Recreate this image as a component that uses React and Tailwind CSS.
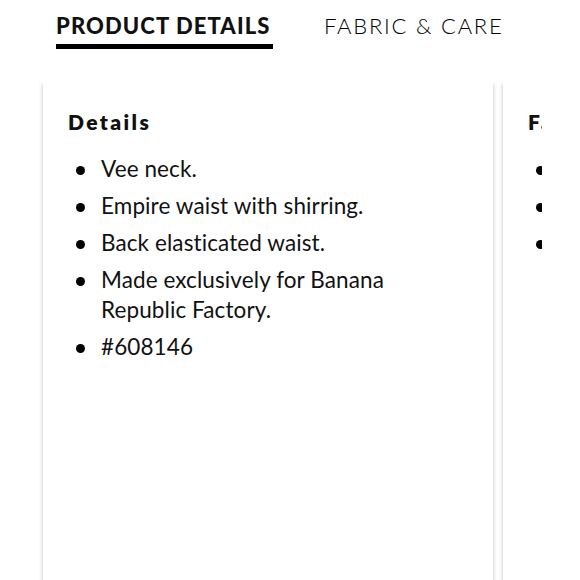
import React from "react";

const details = [
  "Vee neck.",
  "Empire waist with shirring.",
  "Back elasticated waist.",
  "Made exclusively for Banana Republic Factory.",
  "#608146",
];

function BulletList({ items }) {
  return (
    <ul className="mt-[18px] flex flex-col gap-[7px]">
      {items.map((item) => (
        <li key={item} className="flex text-[22.5px] leading-[30px] tracking-[0.1px] text-[#111]">
          <span className="mt-[12px] mr-[16px] ml-[8px] h-[9px] w-[9px] shrink-0 rounded-full bg-black" />
          <span>{item}</span>
        </li>
      ))}
    </ul>
  );
}

export default function App() {
  return (
    <div className="h-[580px] w-[580px] overflow-hidden bg-white font-['Lato',sans-serif]">
      <div className="flex gap-[51px] pl-[56px] pt-[12px]">
        <div className="flex flex-col">
          <span className="text-[22px] font-black leading-[28px] tracking-[1.1px] text-[#111]">PRODUCT DETAILS</span>
          <span className="mt-[4px] h-[5px] w-[217px] bg-black" />
        </div>
        <span className="text-[22px] font-light leading-[28px] tracking-[1.8px] text-black">FABRIC &amp; CARE</span>
      </div>

      <div className="mt-[34px] flex w-[542px] gap-[10px] overflow-hidden pl-[43px]">
        <div className="h-[520px] w-[450px] shrink-0 bg-white pl-[25px] pr-[80px] pt-[25px] shadow-[0_0_4px_rgba(0,0,0,0.25)]">
          <h3 className="text-[21px] font-extrabold leading-[28px] tracking-[2.4px] text-[#111]">Details</h3>
          <BulletList items={details} />
        </div>
        <div className="h-[520px] w-[450px] shrink-0 bg-white pl-[25px] pr-[80px] pt-[25px] shadow-[0_0_4px_rgba(0,0,0,0.25)]">
          <h3 className="text-[21px] font-extrabold leading-[28px] tracking-[2.4px] text-[#111]">Fabric</h3>
          <BulletList items={["100% Rayon.", "Machine wash.", "Imported."]} />
        </div>
      </div>
    </div>
  );
}
